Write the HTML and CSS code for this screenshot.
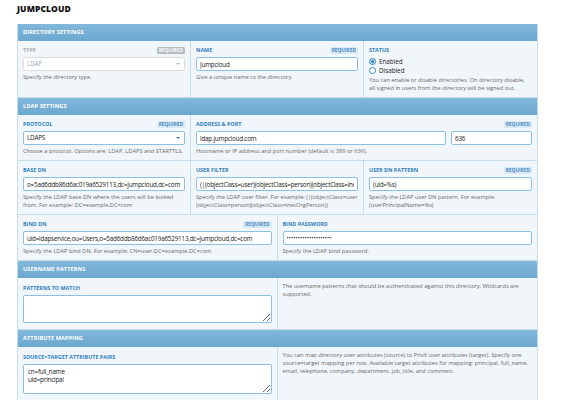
FILE: index.html
```html
<!DOCTYPE html>
<html>
<head>
<meta charset="utf-8">
<link rel="stylesheet" href="styles.css">
</head>
<body>
<div class="page">
  <div class="title">JUMPCLOUD</div>
  <div class="panel">
    <div class="sec-head">DIRECTORY SETTINGS</div>
    <div class="row cols-3">
      <div class="cell">
        <div class="label disabled"><span>TYPE</span><span class="badge badge-dis">REQUIRED</span></div>
        <div class="select-wrap">
          <div class="field select dis">LDAP</div>
          <span class="arrow arrow-dis"></span>
        </div>
        <div class="help">Specify the directory type.</div>
      </div>
      <div class="cell">
        <div class="label"><span>NAME</span><span class="badge">REQUIRED</span></div>
        <input class="field" type="text" value="Jumpcloud">
        <div class="help">Give a unique name to the directory.</div>
      </div>
      <div class="cell">
        <div class="label"><span>STATUS</span></div>
        <div class="radio-line"><span class="radio on"></span>Enabled</div>
        <div class="radio-line"><span class="radio"></span>Disabled</div>
        <div class="help tight">You can enable or disable directories. On directory disable, all signed in users from the directory will be signed out.</div>
      </div>
    </div>

    <div class="sec-head">LDAP SETTINGS</div>
    <div class="row cols-1-2">
      <div class="cell">
        <div class="label"><span>PROTOCOL</span><span class="badge">REQUIRED</span></div>
        <div class="select-wrap">
          <div class="field select">LDAPS</div>
          <span class="arrow"></span>
        </div>
        <div class="help">Choose a protocol. Options are: LDAP, LDAPS and STARTTLS.</div>
      </div>
      <div class="cell">
        <div class="label"><span>ADDRESS &amp; PORT</span><span class="badge">REQUIRED</span></div>
        <div class="addr">
          <input class="field" type="text" value="ldap.jumpcloud.com">
          <input class="field port" type="text" value="636">
        </div>
        <div class="help">Hostname or IP address and port number (default is 389 or 636).</div>
      </div>
    </div>
    <div class="row cols-3">
      <div class="cell">
        <div class="label"><span>BASE DN</span></div>
        <input class="field" type="text" value="o=5ad6ddb86d6ac019a6529113,dc=jumpcloud,dc=com">
        <div class="help">Specify the LDAP base DN where the users will be looked from. For example: DC=example,DC=com</div>
      </div>
      <div class="cell">
        <div class="label"><span>USER FILTER</span></div>
        <input class="field" type="text" value="(|(objectClass=user)(objectClass=person)(objectClass=inetOrgPerson))">
        <div class="help nowrap">Specify the LDAP user filter. For example: (|(objectClass=user)<br>(objectClass=person)(objectClass=inetOrgPerson))</div>
      </div>
      <div class="cell">
        <div class="label"><span>USER DN PATTERN</span><span class="badge">REQUIRED</span></div>
        <input class="field" type="text" value="(uid=%s)">
        <div class="help">Specify the LDAP user DN pattern. For example: (userPrincipalName=%s)</div>
      </div>
    </div>
    <div class="row cols-2">
      <div class="cell">
        <div class="label"><span>BIND DN</span><span class="badge">REQUIRED</span></div>
        <input class="field" type="text" value="uid=ldapservice,ou=Users,o=5ad6ddb86d6ac019a6529113,dc=jumpcloud,dc=com">
        <div class="help">Specify the LDAP bind DN. For example: CN=user,DC=example,DC=com</div>
      </div>
      <div class="cell">
        <div class="label"><span>BIND PASSWORD</span></div>
        <input class="field pw" type="password" value="secretpassword123456">
        <div class="help">Specify the LDAP bind password.</div>
      </div>
    </div>

    <div class="sec-head">USERNAME PATTERNS</div>
    <div class="row cols-2">
      <div class="cell cell-area">
        <div class="label"><span>PATTERNS TO MATCH</span></div>
        <textarea class="field area area-1"></textarea>
      </div>
      <div class="cell cell-area">
        <div class="help side">The username patterns that should be authenticated against this directory. Wildcards are supported.</div>
      </div>
    </div>

    <div class="sec-head">ATTRIBUTE MAPPING</div>
    <div class="row cols-2">
      <div class="cell cell-area">
        <div class="label"><span>SOURCE=TARGET ATTRIBUTE PAIRS</span></div>
        <textarea class="field area area-2">cn=full_name
uid=principal</textarea>
      </div>
      <div class="cell cell-area">
        <div class="help side">You can map directory user attributes (source) to PrivX user attributes (target). Specify one source=target mapping per row. Available target attributes for mapping: principal, full_name, email, telephone, company, department, job_title, and comment.</div>
      </div>
    </div>
  </div>
</div>
</body>
</html>
```

FILE: styles.css
```css
html, body {
  margin: 0;
  padding: 0;
  background: #ffffff;
}
body {
  font-family: "Open Sans", "Liberation Sans", sans-serif;
  color: #222;
}
.page {
  padding: 3px 0 0 17px;
}
.title {
  font-size: 8.5px;
  font-weight: 800;
  line-height: 11px;
  height: 11px;
  margin-bottom: 10px;
  color: #111;
  letter-spacing: 0.1px;
}
.panel {
  width: 521px;
  border-left: 1px solid #c8dcea;
  border-right: 1px solid #c8dcea;
  box-sizing: border-box;
}
.sec-head {
  height: 17px;
  line-height: 17px;
  background: linear-gradient(#82b8db, #6ba7cf);
  color: #fff;
  font-size: 5.6px;
  font-weight: 700;
  padding-left: 5px;
  letter-spacing: 0.1px;
}
.row {
  display: grid;
  background: #f1f6fa;
  border-bottom: 1px solid #c8dcea;
}
.cols-3 { grid-template-columns: 1fr 1fr 1fr; }
.cols-1-2 { grid-template-columns: 1fr 2fr; }
.cols-2 { grid-template-columns: 1fr 1fr; }
.cell {
  padding: 5px 5px 5px 5px;
  border-right: 1px solid #c8dcea;
  min-width: 0;
}
.cell:last-child { border-right: none; }
.cell-area {
  padding-top: 6px;
}
.label {
  display: flex;
  justify-content: space-between;
  align-items: center;
  height: 8px;
  margin-bottom: 3px;
  font-size: 5.4px;
  font-weight: 700;
  color: #2f80c0;
}
.label.disabled { color: #a9b0b6; }
.badge {
  font-size: 4.8px;
  font-weight: 700;
  line-height: 7px;
  padding: 0 2px;
  background: #d8e8f4;
  color: #4a8cc2;
  border-radius: 1.5px;
}
.badge-dis {
  background: #b3bac0;
  color: #ffffff;
}
.field {
  display: block;
  width: 100%;
  height: 14px;
  box-sizing: border-box;
  border: 1px solid #8cc0e2;
  border-radius: 2px;
  background: #fff;
  padding: 0 3px;
  margin: 0;
  font-family: "Open Sans", "Liberation Sans", sans-serif;
  font-size: 6.3px;
  letter-spacing: -0.2px;
  color: #222;
  outline: none;
}
.select {
  line-height: 12px;
}
.select.dis {
  border-color: #d6dee4;
  color: #a6adb3;
}
.select-wrap {
  position: relative;
}
.arrow {
  position: absolute;
  right: 5px;
  top: 6px;
  width: 0;
  height: 0;
  border-left: 2.5px solid transparent;
  border-right: 2.5px solid transparent;
  border-top: 2.5px solid #2f80c0;
}
.arrow-dis { border-top-color: #b4bbc1; }
.help {
  margin-top: 2px;
  font-size: 5.7px;
  line-height: 8px;
  color: #6a6a6a;
}
.help.tight {
  margin-top: 1px;
}
.help.nowrap {
  white-space: nowrap;
  overflow: hidden;
}
.help.side {
  margin-top: -2px;
}
.addr {
  display: flex;
  gap: 5px;
}
.addr .field { flex: 1; }
.addr .port { flex: 0 0 81px; }
.field.pw {
  font-size: 6px;
  letter-spacing: 0;
}
.radio-line {
  display: flex;
  align-items: center;
  height: 9px;
  font-size: 6.3px;
  color: #222;
}
.radio {
  width: 7px;
  height: 7px;
  border: 1px solid #3a86c4;
  border-radius: 50%;
  margin-right: 3px;
  background: #fff;
  box-sizing: border-box;
  position: relative;
}
.radio.on {
  background: #cfe3f3;
}
.radio.on::after {
  content: "";
  position: absolute;
  left: 1px;
  top: 1px;
  width: 3px;
  height: 3px;
  border-radius: 50%;
  background: #2f7fc0;
}
.area {
  resize: vertical;
  padding: 3px 4px;
  line-height: 8px;
}
.area-1 { height: 28px; margin-bottom: 1px; }
.area-2 { height: 30px; margin-bottom: 1px; }
```
